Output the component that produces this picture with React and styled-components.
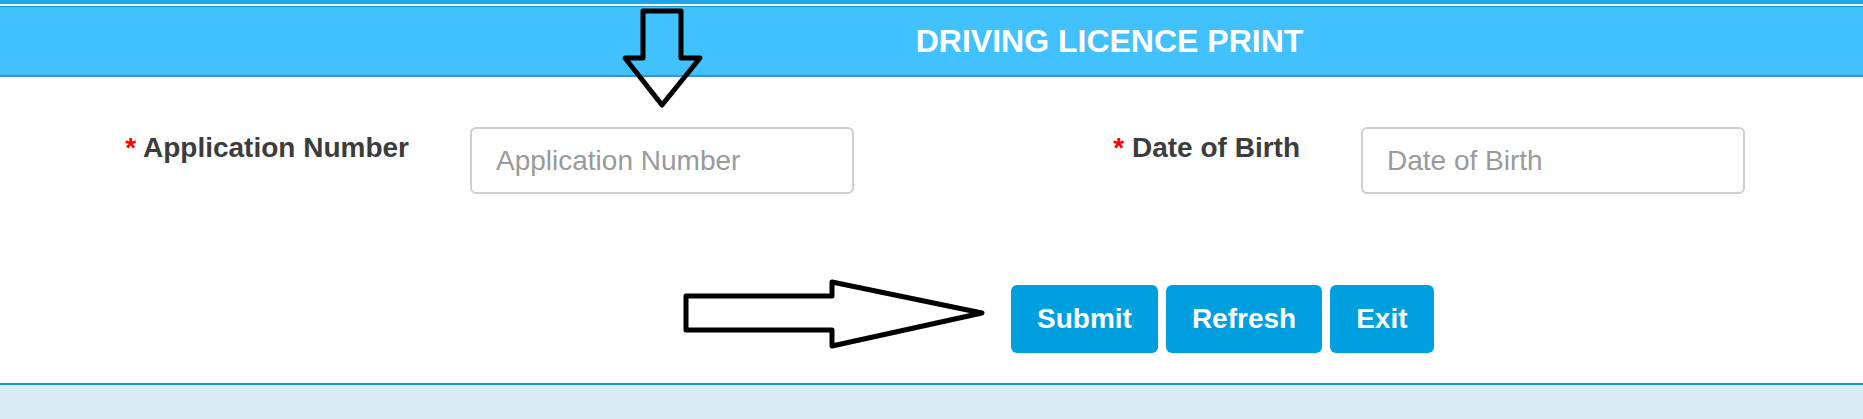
import React from 'react'
import styled, { createGlobalStyle } from 'styled-components'

const GlobalStyle = createGlobalStyle`
  html, body {
    margin: 0;
    padding: 0;
    background: #ffffff;
  }
  body {
    font-family: "Liberation Sans", Arial, sans-serif;
  }
`

const Pagina = styled.div`
  position: relative;
  width: 1863px;
  height: 419px;
  overflow: hidden;
  display: flex;
  flex-direction: column;
`

const FranjaSuperior = styled.div`
  height: 4px;
  background: #1fa6ea;
  margin-bottom: 2px;
`

const Cabecera = styled.header`
  height: 71px;
  box-sizing: border-box;
  border-top: 1px solid #0b9fdc;
  border-bottom: 2px solid #3f90cf;
  background: #41c1fe;
  display: flex;
  align-items: center;
  justify-content: center;
  padding-left: 356px;
`

const Titulo = styled.h1`
  margin: 0;
  font-size: 32px;
  font-weight: 700;
  color: #ffffff;
`

const Formulario = styled.form`
  display: grid;
  grid-template-columns: 470px 384px 507px 384px;
  align-items: start;
  margin-top: 50px;
`

const Etiqueta = styled.label`
  text-align: right;
  padding-right: 61px;
  padding-top: 5px;
  font-size: 28px;
  line-height: 32px;
  font-weight: 700;
  color: #3c3c3c;
  white-space: nowrap;

  span {
    color: #ff0000;
  }
`

const Campo = styled.input`
  box-sizing: border-box;
  width: 384px;
  height: 67px;
  padding: 0 24px;
  border: 2px solid #cfcfcf;
  border-radius: 6px;
  font-family: "Liberation Sans", Arial, sans-serif;
  font-size: 28px;
  color: #333;
  outline: none;

  &::placeholder {
    color: #9a9a9a;
  }
`

const Botonera = styled.div`
  display: flex;
  gap: 8px;
  margin-top: 91px;
  padding-left: 1011px;
`

const Boton = styled.button`
  height: 68px;
  padding: 0 26px;
  border: none;
  border-radius: 6px;
  background: #009fe0;
  color: #ffffff;
  font-family: "Liberation Sans", Arial, sans-serif;
  font-size: 28px;
  font-weight: 700;
  cursor: pointer;
`

const Pie = styled.footer`
  margin-top: 30px;
  flex: 1;
  border-top: 2px solid #0b9bd9;
  background: #d9ecf5;
`

const Anotaciones = styled.svg`
  position: absolute;
  left: 0;
  top: 0;
  pointer-events: none;
`

const App = () => {
  return (
    <>
      <GlobalStyle />
      <Pagina>
        <FranjaSuperior />
        <Cabecera>
          <Titulo>DRIVING LICENCE PRINT</Titulo>
        </Cabecera>

        <Formulario onSubmit={(e) => e.preventDefault()}>
          <Etiqueta htmlFor="appno"><span>*</span> Application Number</Etiqueta>
          <Campo id="appno" type="text" placeholder="Application Number" />
          <Etiqueta htmlFor="dob"><span>*</span> Date of Birth</Etiqueta>
          <Campo id="dob" type="text" placeholder="Date of Birth" />
        </Formulario>

        <Botonera>
          <Boton type="button">Submit</Boton>
          <Boton type="button">Refresh</Boton>
          <Boton type="button">Exit</Boton>
        </Botonera>

        <Pie />

        {/* flechas dibujadas encima de la captura */}
        <Anotaciones width="1863" height="419" viewBox="0 0 1863 419">
          <polygon
            points="643,11 681,11 681,58 700,58 662,105 625,58 643,58"
            fill="none"
            stroke="#000"
            strokeWidth="5"
            strokeLinejoin="round"
          />
          <polygon
            points="686,296 832,296 832,282 982,313 832,346 832,330 686,330"
            fill="none"
            stroke="#000"
            strokeWidth="5"
            strokeLinejoin="round"
          />
        </Anotaciones>
      </Pagina>
    </>
  )
}

export default App
